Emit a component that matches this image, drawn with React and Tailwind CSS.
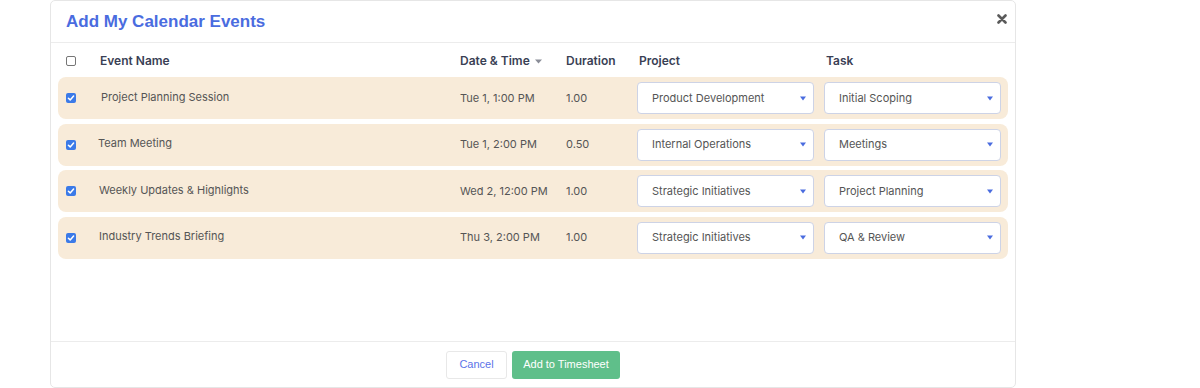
const events = [
    { name: 'Project Planning Session', date: 'Tue 1, 1:00 PM', duration: '1.00', project: 'Product Development', task: 'Initial Scoping', nameClass: 'pl-[1px]' },
    { name: 'Team Meeting', date: 'Tue 1, 2:00 PM', duration: '0.50', project: 'Internal Operations', task: 'Meetings', nameClass: '-ml-[2px]' },
    { name: 'Weekly Updates & Highlights', date: 'Wed 2, 12:00 PM', duration: '1.00', project: 'Strategic Initiatives', task: 'Project Planning', nameClass: '-ml-[1px]' },
    { name: 'Industry Trends Briefing', date: 'Thu 3, 2:00 PM', duration: '1.00', project: 'Strategic Initiatives', task: 'QA & Review', nameClass: '-ml-[1px]' },
];

const gridCols = 'grid grid-cols-[34px_360px_106px_71px_187px_176px] items-center';

const Checkbox = ({ checked }) => (
    checked ? (
        <span className="w-[10px] h-[10px] rounded-[2px] bg-[#3b7ae8] flex items-center justify-center">
            <svg width="8" height="8" viewBox="0 0 8 8">
                <path d="M1.4 4.2 L3.2 5.9 L6.6 2.1" fill="none" stroke="white" strokeWidth="1.5" strokeLinecap="round" strokeLinejoin="round" />
            </svg>
        </span>
    ) : (
        <span className="w-[10px] h-[10px] rounded-[2px] border border-[#767676] bg-white" />
    )
);

const Select = ({ value }) => (
    <div className="h-[32px] w-[177px] bg-white border border-[#cdd3e6] rounded-[4px] flex items-center justify-between pl-[14px] pr-[7px] text-[11px] text-[#555]">
        <span>{value}</span>
        <svg width="6" height="5" viewBox="0 0 6 5">
            <path d="M0 0.5 L6 0.5 L3 4.5 Z" fill="#4a6cdf" />
        </svg>
    </div>
);

export default function App() {
    return (
        <div className="w-[1200px] h-[388px] bg-white font-['Inter',sans-serif]">
            <div className="ml-[50px] w-[966px] h-[388px] border border-[#e6e6e6] rounded-[5px] flex flex-col">
                {/* Header */}
                <div className="h-[42px] border-b border-[#ececec] flex items-center justify-between pl-[15px] pr-[8px] shrink-0">
                    <span className="font-['Liberation_Sans',Arial,sans-serif] font-bold text-[17px] text-[#4a6cdf] pt-[1px]">Add My Calendar Events</span>
                    <svg width="10" height="10" viewBox="0 0 10 10" className="mb-[5px]">
                        <path d="M1.5 1.5 L8.5 8.5 M8.5 1.5 L1.5 8.5" stroke="#5a5a5a" strokeWidth="2.6" strokeLinecap="round" />
                    </svg>
                </div>

                {/* Table */}
                <div className="flex-1 px-[7px] pt-[2px]">
                    <div className={`${gridCols} h-[32px] text-[12px] font-semibold text-[#3a3f55] pl-[8px]`}>
                        <Checkbox checked={false} />
                        <span>Event Name</span>
                        <span className="flex items-center gap-[5px]">
                            Date &amp; Time
                            <svg width="7" height="5" viewBox="0 0 7 5">
                                <path d="M0 0.5 L7 0.5 L3.5 4.5 Z" fill="#8a8d98" />
                            </svg>
                        </span>
                        <span>Duration</span>
                        <span className="pl-[2px]">Project</span>
                        <span className="pl-[2px]">Task</span>
                    </div>
                    <div className="flex flex-col gap-[4.5px]">
                        {events.map((ev) => (
                            <div key={ev.name} className={`${gridCols} h-[42px] bg-[#f8ebd9] rounded-[8px] pl-[8px] text-[11px] text-[#555]`}>
                                <Checkbox checked />
                                <span className={`${ev.nameClass} -mt-[2px]`}>{ev.name}</span>
                                <span>{ev.date}</span>
                                <span>{ev.duration}</span>
                                <Select value={ev.project} />
                                <Select value={ev.task} />
                            </div>
                        ))}
                    </div>
                </div>

                {/* Footer */}
                <div className="h-[46px] border-t border-[#ececec] flex items-center justify-center gap-[5px] shrink-0 font-['Liberation_Sans',Arial,sans-serif] text-[11px]">
                    <button className="h-[28px] w-[61px] bg-white border border-[#e8e8e8] rounded-[3px] text-[#5b73e8]">Cancel</button>
                    <button className="h-[28px] w-[108px] bg-[#5fbf8a] rounded-[3px] text-white">Add to Timesheet</button>
                </div>
            </div>
        </div>
    );
}
